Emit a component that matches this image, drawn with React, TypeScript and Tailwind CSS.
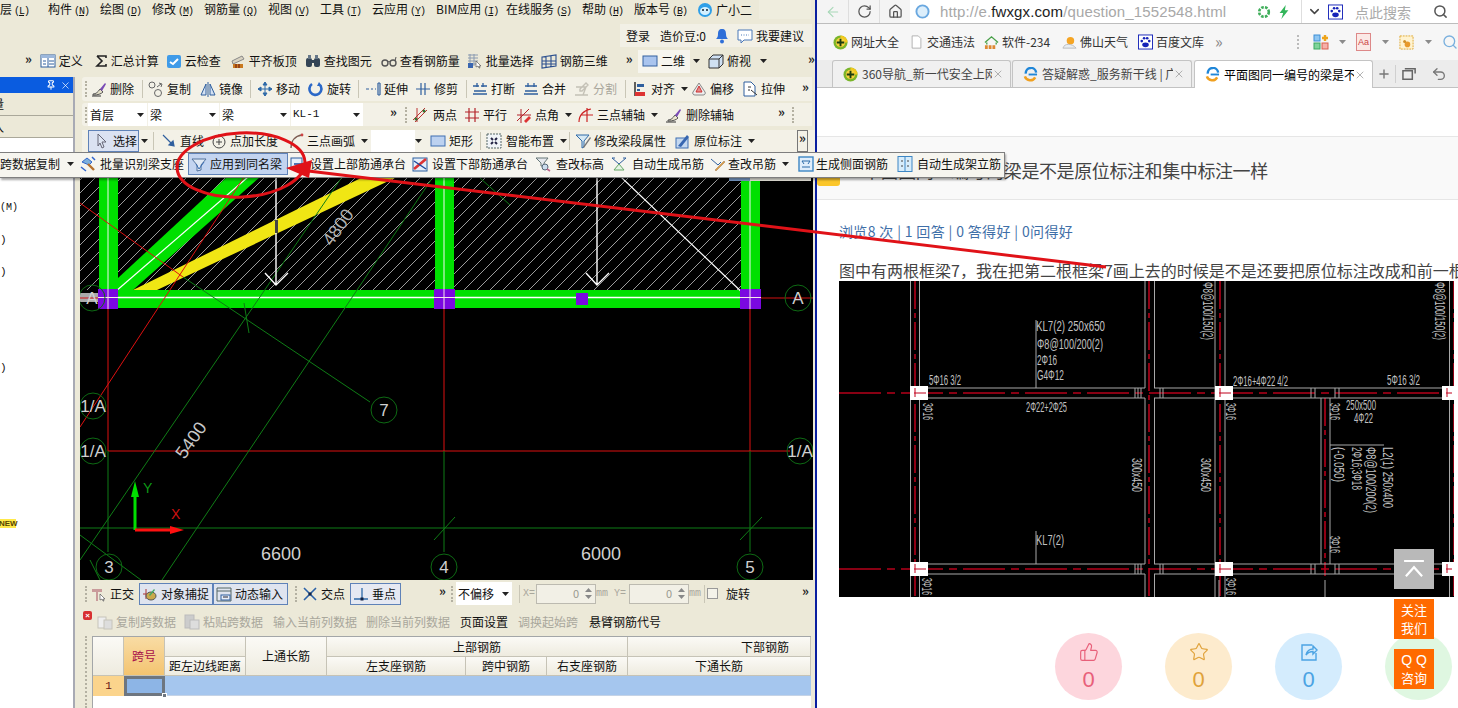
import React from "react";
import { ThumbsUp, Star, RotateCw, Search, Plus, ChevronDown, Undo2, ArrowLeft, Home, Pin, X } from "lucide-react";

type N = React.ReactNode;
const S = ({ children, c }: { children: N; c?: string }) => (
  <svg viewBox="0 0 16 16" className={c ?? "w-4 h-4 shrink-0"} fill="none">{children}</svg>
);
const B = "#2f5f9e";
const ic: Record<string, N> = {
  define: <S><rect x="1" y="2" width="14" height="12" fill="#fff" stroke={B} /><rect x="1" y="2" width="14" height="3" fill="#9db8dc" /><path d="M8 5v9M9 8h5M9 11h5M3 8h3M3 11h3" stroke={B} /></S>,
  sigma: <S><path d="M3 3h9v2M3 3l5 5-5 5h9v-2" stroke="#222" strokeWidth="1.6" /></S>,
  cloud: <S><rect x="1" y="2" width="14" height="13" rx="2" fill="#3f9be8" /><path d="M4 9l3 2 5-5" stroke="#fff" strokeWidth="2" /></S>,
  align: <S><path d="M2 8l10-5 2 3-11 5z" fill="#d8d2c0" stroke="#888" /><rect x="3" y="11" width="10" height="4" fill="#c9791e" /><path d="M6 11v4M9 11v4" stroke="#611" /></S>,
  find: <S><rect x="1" y="5" width="6" height="9" rx="2" fill="#345" /><rect x="9" y="5" width="6" height="9" rx="2" fill="#345" /><rect x="3" y="2" width="3" height="4" fill="#678" /><rect x="10" y="2" width="3" height="4" fill="#678" /><rect x="6" y="7" width="4" height="3" fill="#345" /></S>,
  glasses: <S><circle cx="4" cy="10" r="3" stroke="#555" strokeWidth="1.4" /><circle cx="12" cy="10" r="3" stroke="#555" strokeWidth="1.4" /><path d="M7 9c1-1 1-1 2 0M14 8l1-4" stroke="#555" /></S>,
  batch: <S><path d="M1 2h10M1 5h10M1 8h10M1 11h10M3 1v12M7 1v12" stroke="#8a9ab0" /><rect x="1" y="10" width="5" height="5" fill="#3a66b0" /><path d="M9 8l5 5-2 0 1 2-1 0-1-2-2 1z" fill="#fff" stroke="#444" strokeWidth=".6" /></S>,
  r3d: <S><path d="M1 4l14-2v11L1 15zM5 3v12M10 3v11M1 8h14M1 11h14" stroke="#2b4f8e" strokeWidth="1.1" /></S>,
  twoD: <S><rect x="1" y="3" width="14" height="10" fill="#a9c4ee" stroke="#33609f" /></S>,
  cube: <S><path d="M1 6l4-4h10v9l-4 4H1z" fill="#cfe0f2" stroke="#333" /><path d="M1 6h10v9M11 6l4-4" stroke="#333" /></S>,
  del: <S><path d="M2 13c3 0 5-2 7-5l3 3c-2 2-5 3-10 3z" fill="#e5e0c8" stroke="#555" /><path d="M9 8l5-6 1 1-4 7z" fill="#7a4bb5" /><path d="M1 15h9" stroke="#333" /></S>,
  copy: <S><circle cx="4" cy="4" r="3" stroke="#666" /><circle cx="10" cy="12" r="3.5" stroke="#666" /><path d="M11 2l3 1-1 3M13 3l-4 3" stroke="#666" /></S>,
  mirror: <S><path d="M1 14L6 3v11zM15 14L10 3v11zM8 1v15" stroke="#2f5f9e" fill="#d5e2f3" /></S>,
  move: <S><path d="M8 1v14M1 8h14M8 1L6 4h4zM8 15l-2-3h4zM1 8l3-2v4zM15 8l-3-2v4z" stroke="#2f6aa8" fill="#2f6aa8" /></S>,
  rotate: <S><path d="M4 3a6 6 0 1 0 8 1" stroke="#2b68c8" strokeWidth="2.6" /><path d="M11 1l3 4-5 0z" fill="#2b68c8" /></S>,
  extend: <S><path d="M1 8h3M6 8h2M10 8h1M13 2v12M15 2v12M13 2h2M13 14h2" stroke="#2f5f9e" strokeWidth="1.2" /></S>,
  trim: <S><path d="M1 8h14M6 2v12M10 2v12" stroke="#2f5f9e" strokeWidth="1.2" /></S>,
  brk: <S><path d="M1 5h6M9 5h6M1 13h14M2 10h12M5 2v4M11 2v4" stroke="#2f5f9e" strokeWidth="1.3" /></S>,
  merge: <S><path d="M2 5h12M1 13h14M2 10h12M5 2v4M11 2v4" stroke="#2f5f9e" strokeWidth="1.3" /></S>,
  split: <S><path d="M1 14h13M2 6h10l-3 8M12 2l2 2-6 6-2 0 0-2z" stroke="#c4c1b6" strokeWidth="1.4" /></S>,
  alignL: <S><path d="M3 1v14" stroke="#222" strokeWidth="1.4" /><rect x="5" y="3" width="7" height="3" fill="#2f5f9e" /><rect x="5" y="8" width="3" height="2" fill="#2f5f9e" /><rect x="3" y="11" width="10" height="4" fill="#d33" /></S>,
  offset: <S><path d="M8 2l6 9a2 2 0 0 1-2 3H4a2 2 0 0 1-2-3z" fill="#eee" stroke="#888" /><path d="M8 5l3 6H5z" fill="#e58a8a" stroke="#c33" /></S>,
  stretch: <S><path d="M2 1h7l4 4v10H2z" fill="#fff" stroke="#2f5f9e" /><path d="M9 9l6 5M6 6h3M6 9h2" stroke="#333" /></S>,
  twoPt: <S><path d="M1 13L13 1M3 15L15 3M5 1v14" stroke="#b33" /><circle cx="4" cy="12" r="1.5" fill="#373" /><circle cx="12" cy="4" r="1.5" fill="#373" /></S>,
  para: <S><path d="M1 5h14M1 11h14M5 1v14M11 1v14" stroke="#b4232a" strokeWidth="1.2" /></S>,
  angle: <S><path d="M1 14L13 2M1 8h14M5 2v14" stroke="#b4232a" /><path d="M8 14l5-5 2 2-5 5z" fill="#d33" /></S>,
  arcAxis: <S><path d="M1 15C1 8 6 3 13 2M9 1v14M3 8h12" stroke="#c22" strokeWidth="1.2" /></S>,
  delAxis: <S><path d="M2 13c3 0 5-2 7-5l3 3c-2 2-5 3-10 3z" fill="#ece7cf" stroke="#555" /><path d="M9 8l5-6 1 1-4 7z" fill="#7a4bb5" /><path d="M0 15h10" stroke="#333" /></S>,
  pointer: <S><path d="M4 1l8 8-4 0 2 5-2 1-2-5-2 3z" fill="#dfe6f4" stroke="#667" /></S>,
  line: <S><path d="M2 2l10 10M13 13l-5-1 4-4z" stroke="#2f5f9e" strokeWidth="1.2" fill="#2f5f9e" /></S>,
  ptLen: <S><circle cx="8" cy="9" r="6" stroke="#444" /><path d="M8 6v6M5 9h6M8 1v3" stroke="#444" /></S>,
  arc: <S><path d="M3 15C3 8 7 3 14 2" stroke="#7c5b52" strokeWidth="1.4" /><circle cx="14" cy="2" r="1.4" fill="#c44" /></S>,
  rect: <S><rect x="1" y="3" width="14" height="10" fill="#bcd1f0" stroke="#3f6fb2" /></S>,
  smart: <S><rect x="1" y="1" width="14" height="14" fill="#f0f4f8" stroke="#566" strokeDasharray="2 1" /><path d="M5 5l2 2M11 5L9 7M5 11l2-2M11 11L9 9" stroke="#224" strokeWidth="2" /></S>,
  filterEdit: <S><path d="M1 2h13L9 8v6l-2 1V8z" fill="#d7e9f4" stroke="#2f6aa8" /><path d="M8 14l7-10 1 1-7 10z" fill="#777" /></S>,
  orig: <S><rect x="1" y="5" width="12" height="10" fill="#c4d8f0" stroke="#3f6fb2" /><path d="M3 13l9-11 2 2-8 10z" fill="#3766b0" /></S>,
  wand: <S><path d="M2 6l5-4 5 4-3 3z" fill="#7db0dc" stroke="#36c" /><path d="M8 8l6 6" stroke="#b5702c" strokeWidth="2.4" /><path d="M1 11l5 4M12 1l3 3" stroke="#36c" strokeWidth="1.5" /></S>,
  filter: <S><path d="M1 3h14L10 9v5l-4 1V9z" fill="#dfe8f4" stroke="#53729c" /><path d="M5 8l3 5 5-7" stroke="#3a6db3" /></S>,
  up: <S><rect x="1" y="2" width="11" height="11" fill="#e5eefa" stroke="#2f5f9e" /><path d="M4 8h10M4 11h10" stroke="#1b4a9c" strokeWidth="1.4" /><path d="M8 15l7-7" stroke="#d33" strokeWidth="1.6" /></S>,
  down: <S><rect x="1" y="2" width="14" height="13" fill="#e5eefa" stroke="#2b5f9f" /><path d="M2 13l12-10" stroke="#d33" strokeWidth="2.6" /><path d="M2 5l12 8" stroke="#1b4a9c" strokeWidth="1.4" /></S>,
  level: <S><path d="M1 2h12L9 7v3H6V7z" fill="#e6e9ee" stroke="#677" /><circle cx="10" cy="11" r="3" fill="#cde" stroke="#567" /><path d="M12 13l3 2" stroke="#b68" strokeWidth="1.6" /></S>,
  hang: <S><path d="M1 2l7 6 7-6M1 2h3M12 2h3" stroke="#2f5f9e" /><path d="M3 14l5-6 5 6z" stroke="#67a867" fill="#e5f4e5" /></S>,
  editHang: <S><path d="M1 3l7 6 3-3" stroke="#2f5f9e" /><path d="M5 14l9-9 1 1-9 9z" fill="#e0a040" stroke="#975" strokeWidth=".5" /></S>,
  side: <S><rect x="1" y="1" width="14" height="14" fill="#e0eefc" stroke="#3c86c4" strokeWidth="1.4" /><path d="M4 5h8M4 11h8M4 5l2 3M12 5l-2 3" stroke="#2b6aa8" /></S>,
  stand: <S><rect x="1" y="0.5" width="14" height="15" fill="#d6ecfb" stroke="#3c86c4" /><path d="M8 1v14" stroke="#3c86c4" /><path d="M5 4v2M5 9v2M11 4v2M11 9v2" stroke="#444" /></S>,
  ortho: <S><path d="M1 3h10v3H7v9H5V6H1z" fill="#c99b9b" /><path d="M9 8l5 5-2 0 1 2-1 0-1-2-2 1z" fill="#fff" stroke="#444" strokeWidth=".6" /></S>,
  snap: <S><path d="M1 8h5M4 3v10" stroke="#a33" /><ellipse cx="9" cy="10" rx="5" ry="4" fill="#c9a94c" stroke="#555" /><path d="M7 9l5-6 1 1-5 6z" fill="#4a6" /></S>,
  dyn: <S><path d="M1 2h14v13H1zM1 5h14" stroke="#566" /><rect x="5" y="9" width="9" height="5" fill="#e8eef8" stroke="#2f5f9e" /><path d="M7 11h5" stroke="#223" /></S>,
  cross: <S><path d="M2 2l12 12M14 2L2 14" stroke="#2b62a8" strokeWidth="1.6" /><rect x="6.5" y="6.5" width="3" height="3" fill="#124" /></S>,
  perp: <S><path d="M1 13h14M9 2v11" stroke="#2f6aa8" strokeWidth="1.3" /><rect x="7.5" y="11.5" width="3" height="3" fill="#124" /></S>,
  copyG: <S><rect x="1" y="3" width="8" height="11" fill="#eee" stroke="#c6c4ba" /><rect x="7" y="6" width="8" height="9" fill="#ddd" stroke="#c6c4ba" /></S>,
  pasteG: <S><rect x="1" y="1" width="9" height="13" fill="#ccc" stroke="#bbb" /><rect x="6" y="6" width="9" height="9" fill="#ddd" stroke="#bbb" /></S>,
};

const Dd = ({ c }: { c?: string }) => (
  <svg viewBox="0 0 7 4" className={`w-[7px] h-[4px] shrink-0 ${c ?? ""}`}><path d="M0 0h7L3.5 4z" fill="#222" /></svg>
);
const More = ({ c }: { c?: string }) => <span className={`text-[13px] font-bold leading-none text-[#222] -mt-[6px] ${c ?? ""}`}>»</span>;
const Grip = ({ c }: { c?: string }) => <span className={`h-[16px] border-l-2 border-dotted border-[#b4b1a2] shrink-0 ${c ?? ""}`} />;
const Sep = ({ c }: { c?: string }) => <span className={`h-[18px] w-px bg-[#c9c6b6] shrink-0 ${c ?? ""}`} />;

const T = ({ c, i, l, g, d, off }: { c: string; i?: string; l: string; g?: boolean; d?: boolean; off?: string }) => (
  <div className={`flex items-center shrink-0 whitespace-nowrap ${c} ${g ? "text-[#a9a79c]" : ""}`}>
    {i && ic[i]}
    <span className={off ?? "ml-[3px]"}>{l}</span>
    {d && <Dd c="ml-[6px]" />}
  </div>
);
const Btn = ({ c, i, l, bg }: { c: string; i: string; l: string; bg?: string }) => (
  <div className={`flex items-center shrink-0 whitespace-nowrap border border-[#5f82b8] pl-[2px] h-[22px] ${bg ?? "bg-[#dfe4ef]"} ${c}`}>
    {ic[i]}
    <span className="ml-[3px]">{l}</span>
  </div>
);
const Sel = ({ c, l, mono }: { c: string; l: string; mono?: boolean }) => (
  <div className={`flex items-center justify-between bg-white h-[23px] pl-[2px] pr-[3px] shrink-0 ${c} ${mono ? "font-['Liberation_Mono',monospace] text-[11px]" : ""}`}>
    <span>{l}</span><Dd />
  </div>
);
const M = ({ c, a, b }: { c: string; a: string; b: string }) => (
  <div className={`shrink-0 whitespace-nowrap ${c}`}>
    {a}
    <span className="ml-[2px] font-['Liberation_Mono',monospace] text-[10px] tracking-[-1px]">(<u>{b}</u>)</span>
  </div>
);
const Spin = () => (
  <div className="flex items-center justify-end w-[60px] h-[20px] border border-[#bcbab0] bg-[#f2f0e6] text-[#9b9a90] text-[11px] pr-[3px] shrink-0">
    <span className="mr-[6px]">0</span>
    <span className="flex flex-col gap-[3px]">
      <svg viewBox="0 0 7 4" className="w-[7px] h-[4px]"><path d="M3.5 0L7 4H0z" fill="#888" /></svg>
      <svg viewBox="0 0 7 4" className="w-[7px] h-[4px]"><path d="M0 0h7L3.5 4z" fill="#888" /></svg>
    </span>
  </div>
);

const Axis = ({ x, y, t, fs = 16 }: { x: number; y: number; t: string; fs?: number }) => (
  <g>
    <circle cx={x} cy={y} r="13" fill="none" stroke="#0e6a14" strokeWidth="1" />
    <text x={x} y={y + fs * 0.36} textAnchor="middle" fontSize={fs} fill="#d0d0d0" fontFamily="Liberation Sans">{t}</text>
  </g>
);

const Canvas = () => (
  <svg viewBox="80 177 733 403" className="block w-[733px] h-[403px] bg-black shrink-0" fontFamily="Liberation Sans">
    <defs>
      <pattern id="hatch" width="13" height="13" patternUnits="userSpaceOnUse">
        <path d="M0 13L13 0M-2 2L2 -2M11 15L15 11" stroke="#c4c4c4" strokeWidth="0.8" />
      </pattern>
    </defs>
    <rect x="80" y="177" width="680" height="113" fill="url(#hatch)" />
    <rect x="80" y="293" width="28" height="9" fill="#aaa" />
    <path d="M118 278L227 177H260L133 290H118z" fill="#00e000" />
    <path d="M133 290H157L397 177H363z" fill="#f0e614" />
    <rect x="99" y="177" width="19" height="113" fill="#00e000" />
    <rect x="435" y="177" width="19" height="113" fill="#00e000" />
    <rect x="741" y="177" width="19" height="113" fill="#00e000" />
    <rect x="99" y="290" width="661" height="18" fill="#00e000" />
    <path d="M108 177V290M444 177V290M750 177V290" stroke="#f4f4f4" strokeWidth="1" />
    <path d="M99 297.5H760" stroke="#fff" strokeWidth="1.5" />
    <path d="M108 298L248 177" stroke="#fff" strokeWidth="1.2" />
    <path d="M621 177L748 298" stroke="#fff" strokeWidth="1.2" />
    <path d="M108 300V451M444 300V451M750 300V451M108 451H790M80 427L244 177M80 203L183 277" stroke="#dd1010" strokeWidth="1" fill="none" />
    <path d="M108 298H80M750 298H813" stroke="#d01010" strokeWidth="1" />
    <path d="M183 277L370 402M108 451V552M444 451V552M750 451V552M80 528H813M80 560L342 177M162 580L431 180M244 303L249 333M434 540L455 517M740 540L762 517M80 535L141 580M100 580L90 560M480 178L510 205" stroke="#0f7c16" strokeWidth="1" fill="none" />
    <rect x="98" y="289" width="20" height="20" fill="#7a08e0" />
    <rect x="434" y="289" width="21" height="20" fill="#7a08e0" />
    <rect x="740" y="289" width="21" height="20" fill="#7a08e0" />
    <rect x="576" y="293" width="12" height="12" fill="#7a08e0" />
    <path d="M98 297.5H118M434 297.5H455M740 297.5H761M108 289V309M444 289V309M750 289V309" stroke="#f6e8e8" strokeWidth="1" />
    <path d="M276 177V285M265 273L276 285L288 273M597 177V285M586 273L597 285L609 273" stroke="#fff" strokeWidth="1.4" fill="none" />
    <rect x="275" y="220" width="3" height="13" fill="#444" />
    <rect x="729" y="177" width="21" height="4" fill="#7a9cc8" />
    <rect x="750" y="177" width="61" height="4" fill="#eceae0" />
    <text transform="translate(339 228) rotate(-55)" textAnchor="middle" dominantBaseline="middle" fontSize="18" fill="#b0b0b0">4800</text>
    <text transform="translate(192 441) rotate(-55)" textAnchor="middle" dominantBaseline="middle" fontSize="18" fill="#c8c8c8">5400</text>
    <text x="281" y="560" textAnchor="middle" fontSize="18" fill="#d0d0d0">6600</text>
    <text x="601" y="560" textAnchor="middle" fontSize="18" fill="#d0d0d0">6000</text>
    <Axis x={92} y={298} t="A" fs={17} />
    <Axis x={798} y={298} t="A" fs={17} />
    <Axis x={93} y={406} t="1/A" fs={17} />
    <Axis x={93} y={451} t="1/A" fs={17} />
    <Axis x={800} y={451} t="1/A" fs={17} />
    <Axis x={384} y={410} t="7" fs={17} />
    <Axis x={109} y={567} t="3" fs={17} />
    <Axis x={444} y={567} t="4" fs={17} />
    <Axis x={750} y={567} t="5" fs={17} />
    <path d="M135 530V492" stroke="#00e000" strokeWidth="3" />
    <path d="M135 481L139 497H131z" fill="#00e000" />
    <path d="M135 530H172" stroke="#ff1010" strokeWidth="3" />
    <path d="M184 530L170 526V534z" fill="#ff1010" />
    <text x="143" y="493" fontSize="14" fill="#0e9a16">Y</text>
    <text x="171" y="519" fontSize="14" fill="#d01010">X</text>
  </svg>
);

const CT = ({ x, y, w, t, r }: { x: number; y: number; w: number; t: string; r?: boolean }) => (
  <text
    transform={`translate(${x} ${y + (r ? 0 : 1)})${r ? " rotate(90)" : ""}`}
    textLength={w}
    lengthAdjust="spacingAndGlyphs"
    fontSize="14"
    fill="#c0c0c0"
    fontFamily="Liberation Sans"
  >
    {t}
  </text>
);

const Cad = () => {
  const sq: [number, number, number][] = [[910, 386, 18], [1215, 386, 18], [1442, 386, 12], [910, 562, 18], [1215, 562, 18], [1442, 562, 12]];
  return (
    <svg viewBox="839 281 615 316" className="block w-[615px] h-[316px] bg-black shrink-0">
      <path d="M915 281V597M1149 281V597M1220 281V597M1325 398V576M1454 281V597" stroke="#b5001a" strokeWidth="1.6" strokeDasharray="28 4 5 4" />
      <path d="M839 393H1454M839 569H1454" stroke="#b5001a" strokeWidth="1.6" strokeDasharray="42 6 8 6" />
      <path d="M910.5 281V597M919.5 281V597M1145 281V388M1154.5 281V388M1145 398V564M1154.5 398V564M1145 574V597M1154.5 574V597M1215 281V597M1225 281V597M1321 398V564M1330 398V564M1449.5 281V597M928 388H1145M928 398H1145M928 564H1145M928 574H1145M1154 388H1215M1154 398H1215M1154 564H1215M1154 574H1215M1233 388H1442M1233 398H1442M1233 564H1442M1233 574H1442" stroke="#a8a8a8" strokeWidth="1" fill="none" />
      <path d="M1135 388V398M1138 388V398M1141 388V398M1160 388V398M1163 388V398M1311 388V398M1315 388V398M1335 388V398M1339 388V398M1135 564V574M1138 564V574M1141 564V574M1160 564V574M1163 564V574M1311 564V574M1315 564V574M1335 564V574M1339 564V574M1036 320V388M1036 531V564M1330 445H1384M1325 580V597M1219 580V597" stroke="#a8a8a8" strokeWidth="1" fill="none" />
      {sq.map(([x, y, w], k) => (
        <g key={k}>
          <rect x={x} y={y} width={w} height="14" fill="#fff" />
          <path d={`M${x + 4} ${y + 7}h${w - 6}M${x + 5} ${y + 2}v9`} stroke="#c0001c" strokeWidth="1" />
        </g>
      ))}
      <CT x={1036} y={330} w={69} t="KL7(2) 250x650" />
      <CT x={1037} y={348} w={66} t="Φ8@100/200(2)" />
      <CT x={1037} y={364} w={20} t="2Φ16" />
      <CT x={1037} y={379} w={27} t="G4Φ12" />
      <CT x={929} y={384} w={32} t="5Φ16 3/2" />
      <CT x={1026} y={411} w={41} t="2Φ22+2Φ25" />
      <CT x={1233} y={385} w={55} t="2Φ16+4Φ22 4/2" />
      <CT x={1387} y={384} w={33} t="5Φ16 3/2" />
      <CT x={1346} y={409} w={30} t="250x500" />
      <CT x={1354} y={422} w={19} t="4Φ22" />
      <CT x={1036} y={544} w={28} t="KL7(2)" />
      <CT r x={1203} y={282} w={58} t="Φ8@100/150(2)" />
      <CT r x={1435} y={282} w={58} t="Φ8@100/150(2)" />
      <CT r x={923} y={403} w={17} t="3Φ16" />
      <CT r x={1226} y={403} w={17} t="3Φ16" />
      <CT r x={1330} y={403} w={17} t="3Φ16" />
      <CT r x={1330} y={536} w={17} t="3Φ16" />
      <CT r x={922} y={578} w={17} t="3Φ16" />
      <CT r x={1226} y={578} w={17} t="3Φ16" />
      <CT r x={1132} y={458} w={34} t="300x450" />
      <CT r x={1201} y={458} w={34} t="300x450" />
      <CT r x={1383} y={447} w={61} t="L2(1) 250x400" />
      <CT r x={1366} y={447} w={66} t="Φ8@100/200(2)" />
      <CT r x={1352} y={447} w={43} t="2Φ16;3Φ18" />
      <CT r x={1334} y={447} w={35} t="(-0.050)" />
    </svg>
  );
};

const Icon360 = () => (
  <svg viewBox="0 0 16 16" className="w-[15px] h-[15px] shrink-0"><circle cx="8" cy="8" r="7.5" fill="#7ab52a" /><path d="M8 .5a7.5 7.5 0 0 1 7.5 7.5H8z" fill="#f2c81e" /><circle cx="8" cy="8" r="5" fill="#f4d23a" /><path d="M8 4v8M4 8h8" stroke="#1c3d10" strokeWidth="2" /></svg>
);
const IconE = () => (
  <svg viewBox="0 0 16 16" className="w-[15px] h-[15px] shrink-0"><path d="M3 7a5.5 5.5 0 0 1 11-1" stroke="#1f86d8" strokeWidth="2.6" fill="none" /><path d="M2 10a6 6 0 0 0 11 1" stroke="#f0a020" strokeWidth="2.6" fill="none" /><path d="M6 8h9" stroke="#1f86d8" strokeWidth="2" /></svg>
);
const Paw = () => (
  <svg viewBox="0 0 16 16" className="w-[15px] h-[16px] shrink-0"><rect x=".5" y=".5" width="15" height="15" fill="#fff" stroke="#1522b8" /><ellipse cx="8" cy="11" rx="3.5" ry="2.6" fill="#1522b8" /><circle cx="4" cy="7" r="1.4" fill="#1522b8" /><circle cx="12" cy="7" r="1.4" fill="#1522b8" /><circle cx="6.5" cy="4" r="1.4" fill="#1522b8" /><circle cx="9.8" cy="4" r="1.4" fill="#1522b8" /></svg>
);
const BM = ({ c, i, l }: { c: string; i: N; l: string }) => (
  <div className={`flex items-center shrink-0 whitespace-nowrap ${c}`}><span className="w-[15px] flex justify-center">{i}</span><span className="ml-[3px]">{l}</span></div>
);
const Tab = ({ c, i, l, active }: { c: string; i: N; l: string; active?: boolean }) => (
  <div className={`flex items-center h-[27px] shrink-0 rounded-t-[3px] border border-b-0 border-[#c4c4c4] pl-[10px] pr-[6px] ${active ? "bg-white text-black h-[28px] -mb-px" : "bg-[#f0f0f0] text-[#444]"} ${c}`}>
    {i}
    <span className="ml-[4px] flex-1 overflow-hidden whitespace-nowrap leading-[16px]">{l}</span>
    <X className="w-[12px] h-[12px] text-[#999] shrink-0" strokeWidth={1.5} />
  </div>
);
const Circle = ({ c, tc, i }: { c: string; tc: string; i: N }) => (
  <div className={`flex flex-col items-center w-[67px] h-[67px] rounded-full shrink-0 pt-[9px] ${c} ${tc}`}>
    <span className="h-[20px]">{i}</span>
    <span className="text-[22px] leading-[26px] mt-[5px] font-['Liberation_Sans',sans-serif]">0</span>
  </div>
);

const hd = "bg-gradient-to-b from-[#fbfaf6] to-[#eeebdf] border-r border-b border-[#c6c3b6] flex items-center justify-center whitespace-nowrap";

export default function App() {
  return (
    <div className="relative w-[1458px] h-[708px] overflow-hidden flex bg-white text-[12px] leading-none text-[#111] font-['Noto_Sans_CJK_SC','Liberation_Sans',sans-serif]">
      <div className="w-[815px] h-[708px] bg-[#ece9d8] flex flex-col shrink-0 overflow-hidden">
        <div className="flex items-center h-[19px] shrink-0">
          <M c="w-[48px]" a="层" b="L" />
          <M c="w-[52px]" a="构件" b="N" />
          <M c="w-[52px]" a="绘图" b="D" />
          <M c="w-[52px]" a="修改" b="M" />
          <M c="w-[64px]" a="钢筋量" b="Q" />
          <M c="w-[52px]" a="视图" b="V" />
          <M c="w-[52px]" a="工具" b="T" />
          <M c="w-[64px]" a="云应用" b="Y" />
          <M c="w-[70px]" a="BIM应用" b="I" />
          <M c="w-[76px]" a="在线服务" b="S" />
          <M c="w-[52px]" a="帮助" b="H" />
          <M c="w-[63px]" a="版本号" b="B" />
          <svg viewBox="0 0 16 16" className="w-[16px] h-[16px] shrink-0"><circle cx="8" cy="8" r="7" fill="#2f9fe8" /><ellipse cx="8" cy="9" rx="5" ry="4" fill="#d4f0ff" /><circle cx="6" cy="8" r="1" fill="#123" /><circle cx="10" cy="8" r="1" fill="#123" /></svg>
          <span className="ml-[3px] whitespace-nowrap">广小二</span>
          <div className="ml-[7px] w-[52px] h-[19px] bg-[#efedde]" />
        </div>
        <div className="flex justify-end h-[28px] shrink-0 pr-[3px] pt-[5px]">
          <div className="flex items-center w-[192px] h-[23px] bg-[#f2f0e6] pl-[6px] whitespace-nowrap">
            <span>登录</span>
            <span className="ml-[10px]">造价豆:0</span>
            <svg viewBox="0 0 16 16" className="w-[16px] h-[16px] ml-[8px] shrink-0"><path d="M8 1c3 0 4 2 4 5 0 3 1 4 2 5H2c1-1 2-2 2-5 0-3 1-5 4-5z" fill="#2f6fd8" /><circle cx="8" cy="13.5" r="2" fill="#2f6fd8" /></svg>
            <svg viewBox="0 0 16 16" className="w-[16px] h-[16px] ml-[7px] shrink-0"><path d="M1 2h14v10H7l-3 3v-3H1z" fill="#fff" stroke="#4a78b8" /><path d="M4 7h8" stroke="#4a78b8" strokeDasharray="1 1.5" /></svg>
            <span className="ml-[3px]">我要建议</span>
          </div>
        </div>
        <div className="flex items-center h-[28px] shrink-0">
          <More c="ml-[25px] w-[17px]" />
          <T c="w-[54px]" i="define" l="定义" />
          <T c="w-[72px]" i="sigma" l="汇总计算" off="ml-[1px]" />
          <T c="w-[64px]" i="cloud" l="云检查" />
          <T c="w-[75px]" i="align" l="平齐板顶" />
          <T c="w-[76px]" i="find" l="查找图元" />
          <T c="w-[86px]" i="glasses" l="查看钢筋量" />
          <T c="w-[74px]" i="batch" l="批量选择" />
          <T c="w-[85px]" i="r3d" l="钢筋三维" />
          <More c="w-[14px]" />
          <div className="flex items-center w-[52px] h-[23px] bg-[#f6f5ee] pl-[4px] shrink-0">{ic.twoD}<span className="ml-[3px]">二维</span></div>
          <Dd c="ml-[3px]" />
          <T c="ml-[8px] w-[52px]" i="cube" l="俯视" />
          <Dd />
          <More c="ml-[41px]" />
        </div>
        <div className="flex flex-1 min-h-0 mt-[2px]">
          <div className="w-[80px] h-full flex shrink-0">
            <div className="w-[75px] h-full bg-white border-r-2 border-[#a8aab4] flex flex-col shrink-0 overflow-hidden">
              <div className="h-[16px] bg-[#0a5ce0] flex items-center justify-end pr-[2px] gap-[4px] shrink-0">
                <Pin className="w-[10px] h-[10px] text-white" strokeWidth={2.5} />
                <X className="w-[11px] h-[11px] text-white" strokeWidth={1.5} />
              </div>
              <div className="h-[23px] bg-[#ece9d8] border-b border-[#aaa89a] flex items-center shrink-0"><span className="-ml-[8px]">量</span></div>
              <div className="h-[22px] bg-[#ece9d8] border-b border-[#aaa89a] flex items-center shrink-0"><span className="-ml-[8px]">入</span></div>
              <div className="h-[54px] shrink-0" />
              <div className="h-[32px] flex items-center font-['Liberation_Mono',monospace] text-[10px] shrink-0"><span>(M)</span></div>
              <div className="h-[32px] flex items-center shrink-0 font-['Liberation_Mono',monospace] text-[11px]">)</div>
              <div className="h-[32px] flex items-center shrink-0 font-['Liberation_Mono',monospace] text-[11px]">)</div>
              <div className="h-[64px] shrink-0" />
              <div className="h-[32px] flex items-center shrink-0 font-['Liberation_Mono',monospace] text-[11px]">)</div>
              <div className="h-[135px] shrink-0" />
              <div className="w-[17px] h-[9px] bg-[#ffe94a] text-[8px] font-bold leading-[9px] text-[#554400] font-['Liberation_Sans',sans-serif] -ml-[1px]">NEW</div>
            </div>
          </div>
          <div className="flex-1 min-w-0 flex flex-col">
            <div className="flex items-center h-[24px] ml-[2px] mr-[3px] bg-[#f3f1e7] rounded-l-[3px] shrink-0">
              <Grip c="ml-[3px] mr-[4px]" />
              <T c="w-[51px]" i="del" l="删除" off="ml-[3px]" />
              <Sep c="mr-[5px]" />
              <T c="w-[52px]" i="copy" l="复制" />
              <T c="w-[50px]" i="mirror" l="镜像" />
              <Sep c="mr-[6px]" />
              <T c="w-[51px]" i="move" l="移动" />
              <T c="w-[50px]" i="rotate" l="旋转" />
              <Sep c="mr-[6px]" />
              <T c="w-[50px]" i="extend" l="延伸" />
              <T c="w-[51px]" i="trim" l="修剪" />
              <Sep c="mr-[5px]" />
              <T c="w-[51px]" i="brk" l="打断" />
              <T c="w-[51px]" i="merge" l="合并" />
              <T c="w-[51px]" i="split" l="分割" g />
              <Sep c="mr-[6px]" />
              <T c="w-[59px]" i="alignL" l="对齐" d />
              <T c="w-[51px]" i="offset" l="偏移" />
              <T c="w-[58px]" i="stretch" l="拉伸" />
              <More c="ml-[2px]" />
            </div>
            <div className="flex items-center h-[23px] mt-[2px] ml-[2px] mr-[3px] bg-[#f3f1e7] rounded-l-[3px] shrink-0">
              <Grip c="ml-[3px] mr-[1px]" />
              <Sel c="w-[59px] mr-[1px]" l="首层" />
              <Sel c="w-[71px] mr-[1px]" l="梁" />
              <Sel c="w-[70px] mr-[1px]" l="梁" />
              <Sel c="w-[72px]" l="KL-1" mono />
              <More c="ml-[27px] w-[15px]" />
              <Grip c="mr-[5px]" />
              <T c="w-[52px]" i="twoPt" l="两点" off="ml-[5px]" />
              <T c="w-[52px]" i="para" l="平行" />
              <T c="w-[62px]" i="angle" l="点角" d off="ml-[3px]" />
              <T c="w-[88px]" i="arcAxis" l="三点辅轴" d />
              <T c="w-[112px]" i="delAxis" l="删除辅轴" off="ml-[4px]" />
              <More c="w-[14px]" />
              <Grip />
            </div>
            <div className="flex items-center h-[22px] mt-[4px] ml-[2px] shrink-0 bg-[#f3f1e7]">
              <Btn c="ml-[6px] w-[51px] pl-[5px]" i="pointer" l="选择" bg="bg-[#dbe2f2]" />
              <Dd c="ml-[2px]" />
              <Sep c="ml-[5px] mr-[7px]" />
              <T c="w-[50px]" i="line" l="直线" />
              <T c="w-[77px]" i="ptLen" l="点加长度" />
              <T c="w-[83px]" i="arc" l="三点画弧" d />
              <div className="w-[44px] h-[22px] bg-white shrink-0" />
              <Dd c="mr-[8px]" />
              <T c="w-[50px]" i="rect" l="矩形" />
              <Sep c="mr-[5px]" />
              <T c="w-[83px]" i="smart" l="智能布置" d off="ml-[4px]" />
              <Sep c="mr-[5px]" />
              <T c="w-[100px]" i="filterEdit" l="修改梁段属性" />
              <T c="w-[83px]" i="orig" l="原位标注" d />
              <div className="ml-[39px] w-[11px] h-[22px] border border-[#777] flex items-start justify-center pt-[6px] shrink-0"><More /></div>
            </div>
            <div className="h-[25px] shrink-0" />
            <Canvas />
            <div className="flex items-center h-[27px] shrink-0 ml-[2px]">
              <Grip c="ml-[3px] mr-[4px]" />
              <T c="w-[48px]" i="ortho" l="正交" off="ml-[3px]" />
              <Btn c="w-[74px]" i="snap" l="对象捕捉" />
              <Btn c="w-[75px]" i="dyn" l="动态输入" />
              <Grip c="ml-[7px] mr-[5px]" />
              <T c="w-[48px]" i="cross" l="交点" />
              <Btn c="w-[51px]" i="perp" l="垂点" bg="bg-[#e6e9f2]" />
              <More c="ml-[38px] w-[12px]" />
              <Grip c="mr-[3px]" />
              <Sel c="w-[56px]" l="不偏移" />
              <Sep c="ml-[7px] mr-[3px]" />
              <span className="text-[#a9a79c] text-[10px] w-[13px] font-['Liberation_Mono',monospace]">X=</span>
              <Spin />
              <span className="text-[#a9a79c] text-[10px] w-[18px] font-['Liberation_Mono',monospace]">mm</span>
              <span className="text-[#a9a79c] text-[10px] w-[15px] font-['Liberation_Mono',monospace]">Y=</span>
              <Spin />
              <span className="text-[#a9a79c] text-[10px] w-[15px] font-['Liberation_Mono',monospace]">mm</span>
              <Sep c="mr-[2px]" />
              <span className="w-[11px] h-[11px] border border-[#999] bg-[#f4f3ea] shrink-0" />
              <span className="ml-[8px]">旋转</span>
              <More c="ml-[52px]" />
            </div>
            <div className="flex items-center h-[29px] shrink-0 ml-[2px]">
              <span className="ml-[1px] w-[9px] h-[9px] rounded-[2px] bg-[#d83030] text-white text-[8px] leading-[9px] text-center font-bold -mt-[12px] shrink-0 font-['Liberation_Sans',sans-serif]">×</span>
              <T c="ml-[5px] w-[87px]" i="copyG" l="复制跨数据" g />
              <T c="w-[89px]" i="pasteG" l="粘贴跨数据" g />
              <T c="w-[93px]" l="输入当前列数据" g off="" />
              <T c="w-[94px]" l="删除当前列数据" g off="" />
              <T c="w-[58px]" l="页面设置" off="" />
              <T c="w-[71px]" l="调换起始跨" g off="" />
              <T c="w-[73px]" l="悬臂钢筋代号" off="" />
            </div>
            <div className="flex-1 min-h-0 flex ml-[5px]">
              <span className="h-full border-l-2 border-dotted border-[#b4b1a2] shrink-0 mr-[5px]" />
              <div className="w-[719px] h-full bg-white border-l border-t border-[#a3a6a8] shrink-0">
                <div className="grid grid-cols-[31px_41px_81px_81px_139px_81px_81px_183px] grid-rows-[20px_19px_20px]">
                  <div className={`${hd} row-span-2`} />
                  <div className="row-span-2 bg-gradient-to-b from-[#f8dca4] to-[#f4c470] border-r border-b border-[#c6c3b6] flex items-center justify-center text-[#a8104a] whitespace-nowrap">跨号</div>
                  <div className={hd} />
                  <div className={`${hd} row-span-2`}>上通长筋</div>
                  <div className={`${hd} col-span-3`}>上部钢筋</div>
                  <div className={`${hd} pl-[92px]`}>下部钢筋</div>
                  <div className={hd}>距左边线距离</div>
                  <div className={hd}>左支座钢筋</div>
                  <div className={hd}>跨中钢筋</div>
                  <div className={hd}>右支座钢筋</div>
                  <div className={hd}>下通长筋</div>
                  <div className="bg-[#fbd48c] flex items-center justify-center text-[#611] text-[11px] font-['Liberation_Mono',monospace]">1</div>
                  <div className="relative bg-[#8db5e6] border-[3px] border-[#6e7680]">
                    <span className="absolute -right-[5px] -bottom-[5px] w-[5px] h-[5px] bg-[#6e7680] border border-white" />
                  </div>
                  <div className="col-span-6 bg-[#a5c6ee] border-b border-[#c5d3e6]" />
                </div>
              </div>
            </div>
          </div>
        </div>
      </div>

      <div className="w-[2px] h-[708px] bg-[#0a1fa0] shrink-0" />

      <div className="flex-1 min-w-0 h-[708px] flex flex-col text-[#333]">
        <div className="flex items-center h-[24px] bg-[#f4f4f4] border-b border-[#bdbdbd] shrink-0">
          <div className="w-[32px] h-full flex items-center justify-center border-r border-[#dedede] shrink-0"><ArrowLeft className="w-[16px] h-[16px] text-[#a8d8b8]" strokeWidth={1.6} /></div>
          <div className="w-[31px] h-full flex items-center justify-center border-r border-[#dedede] shrink-0"><RotateCw className="w-[15px] h-[15px] text-[#555]" strokeWidth={2} /></div>
          <div className="w-[30px] h-full flex items-center justify-center shrink-0"><Home className="w-[15px] h-[15px] text-[#555]" strokeWidth={2} /></div>
          <div className="flex items-center w-[347px] h-full bg-white pl-[5px] shrink-0">
            <svg viewBox="0 0 16 16" className="w-[15px] h-[15px] shrink-0"><circle cx="8" cy="8" r="6.5" fill="#dceefb" stroke="#6aa8e0" strokeWidth="2" /></svg>
            <span className="ml-[10px] text-[15px] tracking-[0.13px] text-[#a8a8a8] whitespace-nowrap font-['Liberation_Sans',sans-serif]">http://e.<span className="text-[#222]">fwxgx.com</span>/question_1552548.html</span>
          </div>
          <div className="flex items-center w-[44px] h-full bg-white shrink-0">
            <svg viewBox="0 0 16 16" className="w-[14px] h-[14px] shrink-0"><circle cx="8" cy="8" r="5.5" fill="none" stroke="#3fae5a" strokeWidth="3" strokeDasharray="3 1.4" /></svg>
            <svg viewBox="0 0 16 16" className="w-[14px] h-[16px] ml-[6px] shrink-0"><path d="M10 0L3 9h4l-2 7 8-10H9z" fill="#32b55a" /></svg>
          </div>
          <div className="w-[26px] h-full bg-white flex items-center justify-center border-l border-[#dedede] shrink-0"><ChevronDown className="w-[15px] h-[15px] text-[#444]" strokeWidth={2.4} /></div>
          <div className="flex-1 h-full bg-white flex items-center pl-[1px] min-w-0">
            <Paw />
            <span className="ml-[12px] text-[14px] text-[#aaa] whitespace-nowrap">点此搜索</span>
            <Search className="ml-[22px] w-[15px] h-[15px] text-[#555] shrink-0" strokeWidth={2.4} />
          </div>
        </div>
        <div className="flex items-center h-[36px] bg-[#f6f6f6] shrink-0 overflow-hidden">
          <span className="w-[16px] shrink-0" />
          <BM c="w-[76px]" i={<Icon360 />} l="网址大全" />
          <BM c="w-[75px]" i={<svg viewBox="0 0 12 16" className="w-[11px] h-[14px]"><path d="M1 1h7l3 3v11H1z" fill="#fff" stroke="#aaa" /></svg>} l="交通违法" />
          <BM c="w-[78px]" i={<svg viewBox="0 0 16 16" className="w-[15px] h-[15px]"><path d="M1 8l7-6 7 6M3 8v2M13 8v2" stroke="#48a048" strokeWidth="1.4" fill="none" /><path d="M1 11h3v4H1zM5 11h3v4H5zM9 11h3v4H9z" fill="#d83" /></svg>} l="软件-234" />
          <BM c="w-[76px]" i={<svg viewBox="0 0 16 16" className="w-[15px] h-[15px]"><circle cx="9" cy="6" r="4" fill="#f5a524" /><path d="M1 14c1-3 3-4 6-4 2 0 6 1 8 4z" fill="#e8edf2" stroke="#bbb" /></svg>} l="佛山天气" />
          <BM c="w-[77px]" i={<Paw />} l="百度文库" />
          <span className="text-[16px] text-[#888] w-[20px] -mt-[3px]">»</span>
          <div className="ml-[65px] h-[14px] border-l-2 border-dotted border-[#bbb] shrink-0" />
          <svg viewBox="0 0 16 16" className="ml-[14px] w-[16px] h-[16px] shrink-0"><rect x="1" y="1" width="6" height="6" fill="#8ec6f2" stroke="#3d8ed6" /><rect x="1" y="9" width="6" height="6" fill="#7fd39a" stroke="#3aa860" /><rect x="9" y="9" width="6" height="6" fill="#f6b0a8" stroke="#d8604e" /><path d="M12 1v6M9 4h6" stroke="#eea41a" strokeWidth="2.4" /></svg>
          <Dd c="ml-[10px] opacity-50" />
          <div className="ml-[10px] w-[15px] h-[18px] bg-[#fbe9e6] border border-[#d88] text-[#c44] text-[9px] leading-[16px] text-center shrink-0 font-['Liberation_Sans',sans-serif]">Aa</div>
          <Dd c="ml-[11px] opacity-50" />
          <svg viewBox="0 0 16 16" className="ml-[10px] w-[15px] h-[17px] shrink-0"><rect x="1" y="1" width="14" height="14" fill="#fff3d0" stroke="#e0a830" strokeDasharray="2 1" /><circle cx="9" cy="10" r="3" fill="#e89a2c" /><circle cx="6" cy="7" r="1.6" fill="#d0902a" /></svg>
          <Dd c="ml-[11px] opacity-50" />
          <Search className="ml-[10px] w-[16px] h-[16px] text-[#7ab0de] shrink-0" />
        </div>
        <div className="flex items-end h-[28px] bg-[#ececec] border-b border-[#c2c2c2] shrink-0">
          <span className="w-[15px] shrink-0" />
          <Tab c="w-[179px] mr-px" i={<Icon360 />} l="360导航_新一代安全上网" />
          <Tab c="w-[180px] mr-[2px]" i={<IconE />} l="答疑解惑_服务新干线 | 广联达" />
          <Tab c="w-[179px]" i={<IconE />} l="平面图同一编号的梁是不是" active />
          <div className="flex items-center h-[27px] flex-1 min-w-0 text-[#777]">
            <Plus className="ml-[4px] w-[14px] h-[14px] shrink-0" strokeWidth={2.4} />
            <span className="ml-[4px] w-px h-[18px] bg-[#d0d0d0] shrink-0" />
            <svg viewBox="0 0 16 16" className="ml-[6px] w-[15px] h-[15px] shrink-0"><path d="M3 3h11v5M1 5h10v9H1z" stroke="#666" strokeWidth="1.6" fill="none" /></svg>
            <Undo2 className="ml-[14px] w-[16px] h-[16px] shrink-0" strokeWidth={2} />
          </div>
        </div>
        <div className="flex-1 min-h-0 flex flex-col bg-white relative">
          <div className="h-[48px] shrink-0" />
          <div className="h-[64px] bg-[#f9f9f9] border-y border-[#e6e6e6] flex items-center shrink-0">
            <div className="w-[23px] h-[34px] mt-[2px] bg-[#fbc62a] rounded-b-[3px] shrink-0" />
            <h1 className="ml-[23px] mt-[3px] text-[18px] tracking-[-0.4px] font-normal leading-none text-[#444] whitespace-nowrap">平面图同一编号的梁是不是原位标注和集中标注一样</h1>
          </div>
          <div className="ml-[22px] mt-[23px] h-[16px] flex items-center text-[14px] tracking-[0.35px] text-[#3f6fa8] whitespace-nowrap shrink-0">浏览8 次 | 1 回答 | 0 答得好 | 0问得好</div>
          <div className="ml-[22px] mt-[21px] h-[20px] flex items-center text-[16px] text-[#444] whitespace-nowrap shrink-0 overflow-hidden">图中有两根框梁7，我在把第二根框梁7画上去的时候是不是还要把原位标注改成和前一根</div>
          <div className="ml-[22px] mt-[1px] shrink-0"><Cad /></div>
          <div className="flex ml-[238px] mt-[36px] gap-[43px] shrink-0">
            <Circle c="bg-[#fdd6dd]" tc="text-[#e8607a]" i={<ThumbsUp className="w-[20px] h-[20px]" strokeWidth={1.4} />} />
            <Circle c="bg-[#fdebcd]" tc="text-[#e0a23a]" i={<Star className="w-[20px] h-[20px]" strokeWidth={1.4} />} />
            <Circle c="bg-[#d4ecfd]" tc="text-[#4ba3e3]" i={<svg viewBox="0 0 20 20" className="w-[20px] h-[20px]" fill="none" stroke="currentColor" strokeWidth="1.4"><path d="M13 3H3v15h14v-7" /><path d="M7 13c1-4 4-6 7-6V4l4 4-4 4V9.5c-3 0-5 1-7 3.5z" /></svg>} />
            <Circle c="bg-[#dff7e1]" tc="text-[#6cc07a]" i={null} />
          </div>
        </div>
      </div>

      <div className="absolute left-[1394px] top-[549px] w-[40px] flex flex-col gap-[10px]">
        <div className="w-[40px] h-[40px] bg-[#b9b9b9] flex items-center justify-center">
          <svg viewBox="0 0 24 20" className="w-[22px] h-[18px]"><path d="M1 1h22M3 18L12 8l9 10" stroke="#fff" strokeWidth="2.4" fill="none" /></svg>
        </div>
        <div className="w-[40px] h-[40px] bg-[#ff6a00] text-white text-[13px] leading-[18px] flex flex-col items-center justify-center">
          <span>关注</span><span>我们</span>
        </div>
        <div className="w-[40px] h-[40px] bg-[#ff6a00] text-white text-[13px] leading-[18px] flex flex-col items-center justify-center">
          <span className="text-[14px] font-['Liberation_Sans',sans-serif]">Q Q</span><span>咨询</span>
        </div>
      </div>
      <div className="absolute left-0 top-[152px] w-[1005px] h-[26px] pb-[3px] bg-[#f6f5ef] border border-l-0 border-[#7f7f7f] shadow-[1px_2px_2px_rgba(0,0,0,0.35)] flex items-center whitespace-nowrap">
        <span className="w-[60px] overflow-hidden shrink-0 leading-[16px]">跨数据复制</span>
        <Dd c="ml-[7px] mr-[6px]" />
        <T c="w-[108px]" i="wand" l="批量识别梁支座" off="ml-[4px]" />
        <Btn c="w-[100px] mr-[2px]" i="filter" l="应用到同名梁" bg="bg-[#c3d4f0]" />
        <T c="w-[122px]" i="up" l="设置上部筋通承台" off="ml-[4px]" />
        <T c="w-[123px]" i="down" l="设置下部筋通承台" off="ml-[4px]" />
        <T c="w-[76px]" i="level" l="查改标高" off="ml-[5px]" />
        <T c="w-[99px]" i="hang" l="自动生成吊筋" off="ml-[5px]" />
        <T c="w-[88px]" i="editHang" l="查改吊筋" off="ml-[2px]" d />
        <T c="w-[99px]" i="side" l="生成侧面钢筋" off="ml-[2px]" />
        <T c="w-[105px]" i="stand" l="自动生成架立筋" off="ml-[4px]" />
      </div>
      <svg viewBox="0 0 1458 708" className="absolute left-0 top-0 w-[1458px] h-[708px] pointer-events-none" fill="none">
        <ellipse cx="241" cy="165" rx="64" ry="32" transform="rotate(-3 241 165)" stroke="#e01218" strokeWidth="3" />
        <path d="M300 170L1106 267" stroke="#e01218" strokeWidth="3" />
        <path d="M286 168L312 160L309 178z" fill="#e01218" />
      </svg>
    </div>
  );
}
